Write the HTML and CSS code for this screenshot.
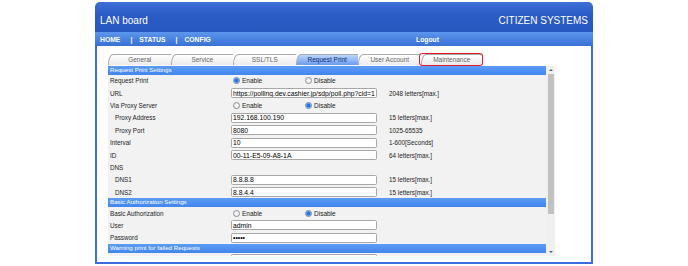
FILE: index.html
```html
<!DOCTYPE html>
<html lang="en">
<head>
  <meta charset="UTF-8" />
  <title>LAN board - Request Print</title>
  <link rel="stylesheet" href="styles.css">
</head>
<body>
  <div class="frame">
    <div class="top">
      <span class="brand">LAN board</span>
      <span class="maker">CITIZEN SYSTEMS</span>
    </div>
    <div class="nav">
      <div class="nav-links">
        <a href="#">HOME</a><span class="sep">|</span><a href="#">STATUS</a><span class="sep">|</span><a href="#">CONFIG</a>
      </div>
      <div class="nav-logout"><a href="#">Logout</a></div>
    </div>
    <div class="content">
      <ul class="tabs">
        <li class="tab">General</li>
        <li class="tab">Service</li>
        <li class="tab">SSL/TLS</li>
        <li class="tab active">Request Print</li>
        <li class="tab">User Account</li>
        <li class="tab">Maintenance<span class="mark"></span></li>
      </ul>
      <div class="panel">
        <div class="sheet">
          <div class="section">Request Print Settings</div>
          <div class="row">
            <span class="label">Request Print</span>
            <span class="choice">
              <label class="option"><input type="radio" name="rp" checked>Enable</label>
              <label class="option"><input type="radio" name="rp">Disable</label>
            </span>
          </div>
          <div class="row">
            <span class="label">URL</span>
            <input class="field" type="text" value="https://polling.dev.cashier.jp/sdp/poll.php?cid=1234567890">
            <span class="hint">2048 letters[max.]</span>
          </div>
          <div class="row">
            <span class="label">Via Proxy Server</span>
            <span class="choice">
              <label class="option"><input type="radio" name="proxy">Enable</label>
              <label class="option"><input type="radio" name="proxy" checked>Disable</label>
            </span>
          </div>
          <div class="row sub">
            <span class="label">Proxy Address</span>
            <input class="field" type="text" value="192.168.100.190">
            <span class="hint">15 letters[max.]</span>
          </div>
          <div class="row sub">
            <span class="label">Proxy Port</span>
            <input class="field" type="text" value="8080">
            <span class="hint">1025-65535</span>
          </div>
          <div class="row">
            <span class="label">Interval</span>
            <input class="field" type="text" value="10">
            <span class="hint">1-600[Seconds]</span>
          </div>
          <div class="row">
            <span class="label">ID</span>
            <input class="field" type="text" value="00-11-E5-09-A8-1A">
            <span class="hint">64 letters[max.]</span>
          </div>
          <div class="row">
            <span class="label">DNS</span>
          </div>
          <div class="row sub">
            <span class="label">DNS1</span>
            <input class="field" type="text" value="8.8.8.8">
            <span class="hint">15 letters[max.]</span>
          </div>
          <div class="row sub">
            <span class="label">DNS2</span>
            <input class="field" type="text" value="8.8.4.4">
            <span class="hint">15 letters[max.]</span>
          </div>

          <div class="section">Basic Authorization Settings</div>
          <div class="row">
            <span class="label">Basic Authorization</span>
            <span class="choice">
              <label class="option"><input type="radio" name="auth">Enable</label>
              <label class="option"><input type="radio" name="auth" checked>Disable</label>
            </span>
          </div>
          <div class="row">
            <span class="label">User</span>
            <input class="field" type="text" value="admin">
          </div>
          <div class="row">
            <span class="label">Password</span>
            <input class="field" type="password" value="admin">
          </div>

          <div class="section">Warning print for failed Requests</div>
          <div class="row">
            <span class="label"></span>
            <input class="field" type="text" value="">
          </div>
        </div>
        <div class="scrollbar">
          <div class="scroll-btn"><span class="arrow-up"></span></div>
          <div class="thumb"></div>
          <div class="track"></div>
          <div class="scroll-btn"><span class="arrow-down"></span></div>
        </div>
      </div>
    </div>
  </div>
</body>
</html>
```

FILE: styles.css
```css
body {
  margin: 0;
  font-family: "Liberation Sans", Arial, sans-serif;
  background: #fff;
}
.frame {
  width: 498px;
  margin: 2px 0 0 95px;
}
.top {
  height: 30px;
  box-sizing: border-box;
  padding: 13px 5px 0;
  display: flex;
  justify-content: space-between;
  align-items: baseline;
  color: #fff;
  font-size: 10px;
  background: linear-gradient(#3d70d8, #2b5bc4 40%, #2857c0);
  border-radius: 5px 5px 0 0;
}
.nav {
  height: 14px;
  display: flex;
  align-items: center;
  background: linear-gradient(#5c96ec, #457fe0 60%, #3a70d4);
  font-size: 6.8px;
  font-weight: bold;
  color: #fff;
}
.nav a {
  color: #fff;
  text-decoration: none;
}
.nav-links {
  width: 167px;
  box-sizing: border-box;
  padding-left: 5px;
  display: flex;
}
.sep {
  margin: 0 7px 0 10px;
}
.nav-logout {
  flex: 1;
  text-align: center;
}
.content {
  height: 218px;
  box-sizing: border-box;
  border: 2px solid #3b6fe0;
  border-top: 0;
  padding: 8px 0 0 11px;
}
.tabs {
  display: flex;
  list-style: none;
  margin: 0 0 1px;
  padding: 0;
  height: 11px;
}
.tab {
  position: relative;
  width: 62.5px;
  box-sizing: border-box;
  border: 1px solid #a9a9a9;
  border-right: 0;
  border-bottom: 0;
  border-top-left-radius: 5px 10px;
  background: linear-gradient(#fff, #ebebeb);
  color: #666;
  font-size: 6.5px;
  line-height: 10px;
  text-align: center;
}
.tab:last-child {
  border-right: 1px solid #a9a9a9;
  border-top-right-radius: 2px;
}
.tab.active {
  background: linear-gradient(#bcd5fb, #6b9cf0);
  color: #0f2c70;
}
.mark {
  position: absolute;
  left: -3px;
  right: -1px;
  top: -2px;
  bottom: -1px;
  border: 1.5px solid #e8192c;
  border-radius: 3px;
}
.panel {
  display: flex;
  width: 447px;
  height: 190px;
  background: #f2f2f2;
}
.sheet {
  width: 438px;
  overflow: hidden;
}
.section {
  height: 8.5px;
  line-height: 8.5px;
  padding-left: 2px;
  font-size: 6.2px;
  color: #fff;
  background: linear-gradient(#5c9cf6, #4186ee);
}
.row {
  display: grid;
  grid-template-columns: 123px 146px auto;
  align-items: center;
  height: 12.4px;
  font-size: 6.3px;
  color: #222;
}
.label {
  padding-left: 2px;
}
.sub .label {
  padding-left: 7px;
}
.hint {
  padding-left: 12px;
}
.field {
  width: 146px;
  height: 10px;
  box-sizing: border-box;
  margin: 0;
  padding: 0 1px;
  border: 1px solid #a8a8a8;
  border-radius: 1.5px;
  background: #fff;
  font: 6.8px "Liberation Sans", Arial, sans-serif;
  color: #000;
  outline: none;
}
.choice {
  display: flex;
  padding-left: 2px;
}
.option {
  width: 79px;
  display: flex;
  align-items: center;
  gap: 2px;
  font-size: 6.5px;
}
.option input {
  appearance: none;
  width: 7px;
  height: 7px;
  margin: 0;
  border: 1px solid #8a8f99;
  border-radius: 50%;
  background: radial-gradient(#fff, #e4e4e4);
}
.option input:checked {
  border-color: #6d86b0;
  background: radial-gradient(circle, #1d6cdc 0, #2a7ae4 1.6px, #8cbcf4 2.4px, #e8f1fc 3px);
}
.scrollbar {
  width: 9px;
  display: flex;
  flex-direction: column;
  background: #f0f0f0;
}
.scroll-btn {
  height: 8px;
  display: flex;
  align-items: center;
  justify-content: center;
}
.arrow-up,
.arrow-down {
  width: 0;
  height: 0;
  border-left: 2px solid transparent;
  border-right: 2px solid transparent;
}
.arrow-up {
  border-bottom: 2px solid #606060;
}
.arrow-down {
  border-top: 2px solid #606060;
}
.thumb {
  height: 140px;
  margin: 0 1px 0 2px;
  background: #c1c1c1;
}
.track {
  flex: 1;
}
```
